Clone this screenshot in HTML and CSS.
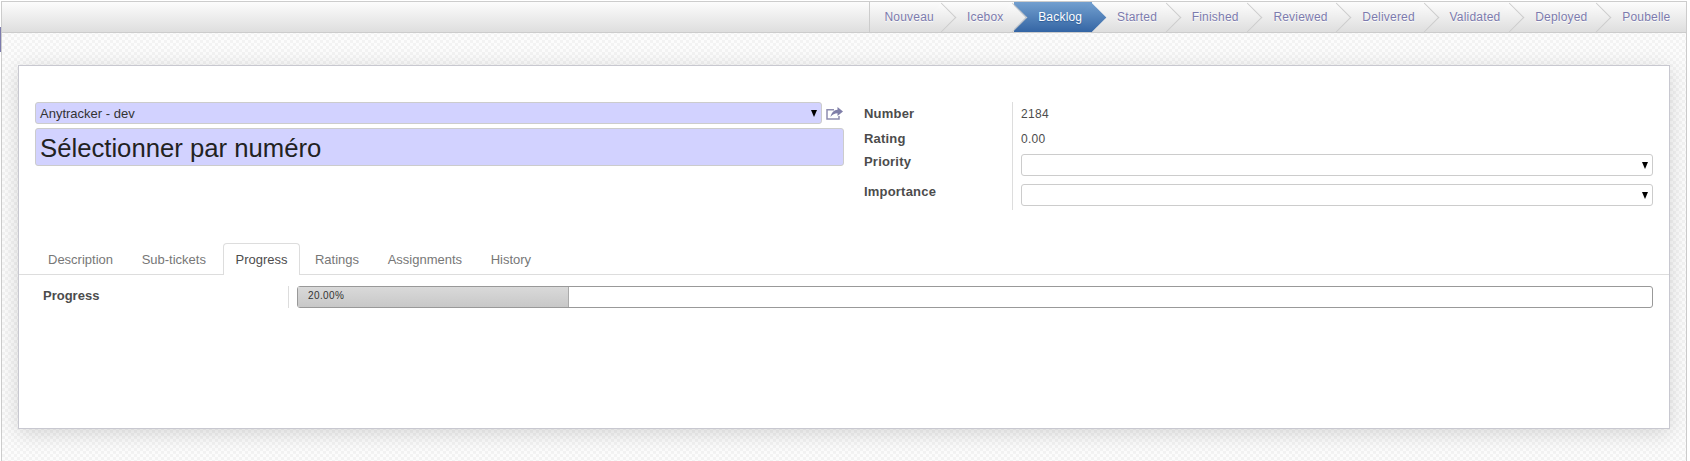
FILE: index.html
```html
<!DOCTYPE html>
<html lang="en">
<head>
    <meta charset="UTF-8">
    <title>Anytracker - Ticket</title>
    <link rel="stylesheet" href="styles.css">
</head>
<body>

<div class="edge-tick"></div>
<div class="view">
    <header class="statusbar">
        <ul class="steps">
            <li class="step"><span>Nouveau</span></li>
            <li class="step"><span>Icebox</span></li>
            <li class="step active"><span>Backlog</span></li>
            <li class="step"><span>Started</span></li>
            <li class="step"><span>Finished</span></li>
            <li class="step"><span>Reviewed</span></li>
            <li class="step"><span>Delivered</span></li>
            <li class="step"><span>Validated</span></li>
            <li class="step"><span>Deployed</span></li>
            <li class="step last"><span>Poubelle</span></li>
        </ul>
    </header>

    <div class="sheet">
        <div class="head">
            <div class="left-group">
                <div class="project-row">
                    <div class="select required">Anytracker - dev<i class="caret"></i></div>
                    <svg class="share" width="17" height="14" viewBox="0 0 17 14">
                        <path d="M8 3.700H1v9.300h12v-3" fill="none" stroke="#8e8db0" stroke-width="1.500"/>
                        <path d="M17 5.500L11.500 1v2.800C8 4 5.500 6.500 4.500 11c2-2.500 4-3.700 7-3.700V10z" fill="#7f7ea8"/>
                    </svg>
                </div>
                <div class="title-input">Sélectionner par numéro</div>
            </div>
            <div class="right-group">
                <div class="labels">
                    <div class="label row-text">Number</div>
                    <div class="label row-text">Rating</div>
                    <div class="label row-select">Priority</div>
                    <div class="label row-select">Importance</div>
                </div>
                <div class="values">
                    <div class="value row-text">2184</div>
                    <div class="value row-text">0.00</div>
                    <div class="select"><i class="caret"></i></div>
                    <div class="select"><i class="caret"></i></div>
                </div>
            </div>
        </div>

        <ul class="tabs">
            <li>Description</li>
            <li>Sub-tickets</li>
            <li class="current">Progress</li>
            <li>Ratings</li>
            <li>Assignments</li>
            <li>History</li>
        </ul>

        <div class="progress-row">
            <div class="label progress-label">Progress</div>
            <div class="progress-cell">
                <div class="progressbar">
                    <div class="progress-fill" style="width: 20%">20.00%</div>
                </div>
            </div>
        </div>
    </div>
</div>

</body>
</html>
```

FILE: styles.css
```css
html, body {
    margin: 0;
    height: 100%;
    background: #fff;
    font-family: "Liberation Sans", Arial, sans-serif;
    font-size: 13px;
    color: #4c4c4c;
    overflow: hidden;
}
ul {
    list-style: none;
    margin: 0;
    padding: 0;
}
.edge-tick {
    position: absolute;
    left: 0;
    top: 27px;
    width: 1px;
    height: 25px;
    background: #7c7bad;
}
.view {
    margin: 1px 3px 0 1px;
    height: 460px;
    border-left: 1px solid #ccc;
    border-right: 1px solid #ccc;
    background: repeating-conic-gradient(#f3f3f3 0 25%, #fcfcfc 0 50%) 0 0 / 6px 6px;
}

/* status bar */
.statusbar {
    display: flex;
    justify-content: flex-end;
    height: 30px;
    border-top: 1px solid #ccc;
    border-bottom: 1px solid #ccc;
    background: linear-gradient(#fcfcfc, #dedede);
}
.steps {
    display: flex;
    border-left: 1px solid #ccc;
}
.step {
    position: relative;
    padding: 0 19.700px 0 15px;
    line-height: 30px;
    font-size: 12px;
    letter-spacing: 0.2px;
    color: #7c7bad;
    text-shadow: 0 1px 1px #fff;
}
.step:first-child {
    padding: 0 18px 0 14px;
}
.step span {
    position: relative;
    z-index: 3;
}
.step::after {
    content: "";
    position: absolute;
    z-index: 2;
    top: 4.500px;
    right: 0;
    width: 21px;
    height: 21px;
    box-sizing: border-box;
    border-top: 1px solid #ccc;
    border-right: 1px solid #ccc;
    transform: rotate(45deg);
    background: linear-gradient(to bottom right, #fcfcfc, #dedede);
}
.step.last {
    padding-right: 15.500px;
}
.step.last::after {
    display: none;
}
.step.active {
    color: #fff;
    text-shadow: 0 1px 1px #2c5a96;
}
.step.active::before {
    content: "";
    position: absolute;
    z-index: 1;
    top: 0;
    bottom: 0;
    left: -9px;
    right: 10px;
    background: linear-gradient(#729fcf, #3465a4);
}
.step.active::after {
    border: 0;
    background: linear-gradient(to bottom right, #729fcf, #3465a4);
}

/* sheet */
.sheet {
    margin: 32px 16px 0 16px;
    height: 362px;
    background: #fff;
    border: 1px solid #c8c8d0;
    box-shadow: 0 4px 20px rgba(0, 0, 0, 0.15);
}
.head {
    display: flex;
    gap: 20px;
    padding: 36px 16px 0;
    height: 141px;
}
.left-group {
    width: 809px;
    flex: none;
}
.project-row {
    display: flex;
    align-items: center;
    justify-content: space-between;
}
.project-row .share {
    margin-right: 1px;
}
.select {
    display: flex;
    align-items: center;
    justify-content: space-between;
    box-sizing: border-box;
    height: 22px;
    padding: 0 4px;
    border: 1px solid #ccc;
    border-radius: 3px;
    background: #fff;
    font-size: 12px;
}
.select.required {
    width: 787px;
    background: #d2d2ff;
    font-size: 13px;
    color: #333;
}
.caret {
    width: 0;
    height: 0;
    margin-left: auto;
    border-left: 3.500px solid transparent;
    border-right: 3.500px solid transparent;
    border-top: 7px solid #000;
}
.share {
    display: block;
}
.title-input {
    box-sizing: border-box;
    height: 38px;
    margin-top: 4px;
    padding: 0 4px;
    line-height: 38px;
    border: 1px solid #ccc;
    border-radius: 3px;
    background: #d2d2ff;
    font-size: 25.700px;
    color: #222;
}
.right-group {
    display: flex;
    flex: 1;
    height: 108px;
}
.labels {
    width: 148px;
    flex: none;
}
.label {
    font-weight: bold;
    letter-spacing: 0.2px;
    color: #4c4c4c;
}
.row-text {
    height: 25px;
    line-height: 24px;
}
.row-select {
    height: 30px;
    line-height: 20px;
}
.values {
    flex: 1;
    padding-left: 8px;
    border-left: 1px solid #ddd;
}
.values .select {
    margin-bottom: 8px;
}
.values .value + .select {
    margin-top: 2px;
}
.value {
    font-size: 12px;
    letter-spacing: 0.3px;
}

/* tabs */
.tabs {
    display: flex;
    height: 31px;
    padding-left: 15px;
    border-bottom: 1px solid #ddd;
}
.tabs li {
    box-sizing: border-box;
    height: 32px;
    padding: 0 13.600px 0 13px;
    line-height: 32px;
    border: 1px solid transparent;
    border-bottom: 0;
    color: #777;
}
.tabs li.current {
    margin: 0 1px 0 2px;
    padding: 0 11.400px 0 12px;
    border-color: #ddd;
    border-radius: 4px 4px 0 0;
    background: #fff;
    color: #4c4c4c;
}

/* progress */
.progress-row {
    display: flex;
    padding: 11px 16px 0 24px;
}
.progress-label {
    width: 245px;
    flex: none;
    line-height: 20px;
    letter-spacing: 0;
}
.progress-cell {
    flex: 1;
    padding-left: 8px;
    border-left: 1px solid #ddd;
}
.progressbar {
    box-sizing: border-box;
    height: 22px;
    border: 1px solid #999;
    border-radius: 3px;
    background: #fff;
}
.progress-fill {
    box-sizing: border-box;
    height: 100%;
    padding-left: 10px;
    line-height: 18px;
    font-size: 10px;
    letter-spacing: 0.4px;
    color: #333;
    border-right: 1px solid #aaa;
    background: linear-gradient(#d9d9d9, #c8c8c8);
}
```
